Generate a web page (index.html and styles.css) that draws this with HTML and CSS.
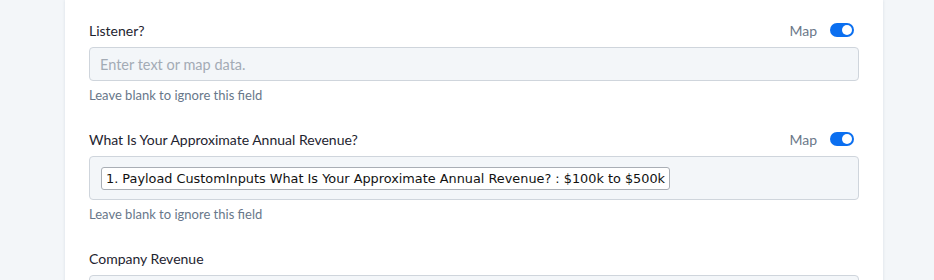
FILE: index.html
```html
<!DOCTYPE html>
<html lang="en">
<head>
    <meta charset="UTF-8">
    <meta name="viewport" content="width=device-width, initial-scale=1.0">
    <title>Field Mapping</title>
    <link rel="stylesheet" href="styles.css">
</head>
<body>
    <div class="card">
        <!-- Listener -->
        <div class="field">
            <div class="field-head">
                <label class="field-label">Listener?</label>
                <div class="map-switch">
                    <span>Map</span>
                    <span class="toggle on"></span>
                </div>
            </div>
            <div class="field-input">
                <span class="placeholder">Enter text or map data.</span>
            </div>
            <div class="field-help">Leave blank to ignore this field</div>
        </div>

        <!-- Revenue -->
        <div class="field">
            <div class="field-head">
                <label class="field-label">What Is Your Approximate Annual Revenue?</label>
                <div class="map-switch">
                    <span>Map</span>
                    <span class="toggle on"></span>
                </div>
            </div>
            <div class="field-input mapped">
                <span class="chip">1. Payload CustomInputs What Is Your Approximate Annual Revenue? : $100k to $500k</span>
            </div>
            <div class="field-help">Leave blank to ignore this field</div>
        </div>

        <!-- Company Revenue -->
        <div class="field">
            <div class="field-head">
                <label class="field-label">Company Revenue</label>
            </div>
            <div class="field-input"></div>
        </div>
    </div>
</body>
</html>
```

FILE: styles.css
```css
body {
    margin: 0;
    background: #f3f6f9;
    font-family: Lato, "Open Sans", sans-serif;
    height: 280px;
    overflow: hidden;
}

.card {
    margin-left: 65px;
    width: 818px;
    box-sizing: border-box;
    padding: 20px 24px 0;
    background: #fff;
    box-shadow: 0 0 3px rgba(40, 60, 90, 0.12);
    min-height: 400px;
}

.field {
    margin-bottom: 26px;
}

.field-head {
    display: flex;
    justify-content: space-between;
    align-items: center;
    height: 20px;
    margin-bottom: 7px;
}

.field-label {
    font-size: 14px;
    color: #1e2430;
}

.map-switch {
    display: flex;
    align-items: center;
    gap: 13px;
    font-size: 14px;
    color: #6b7889;
    padding-right: 5px;
}

.toggle {
    position: relative;
    width: 24px;
    height: 14px;
    border-radius: 7px;
    background: #c8ced6;
}

.toggle.on {
    background: #0b6ff0;
}

.toggle::after {
    content: "";
    position: absolute;
    top: 2px;
    left: 2px;
    width: 10px;
    height: 10px;
    border-radius: 50%;
    background: #fff;
}

.toggle.on::after {
    left: 12px;
}

.field-input {
    height: 34px;
    box-sizing: border-box;
    border: 1px solid #cfd5dc;
    border-radius: 4px;
    background: #f3f6f9;
    padding: 0 10px;
    display: flex;
    align-items: center;
}

.field-input.mapped {
    height: 44px;
    padding: 0 11px;
}

.placeholder {
    font-size: 14.5px;
    color: #a3abb5;
}

.chip {
    font-family: "DejaVu Sans", Verdana, sans-serif;
    font-size: 12.85px;
    color: #111;
    background: #fff;
    border: 1px solid #a9aeb5;
    border-radius: 3px;
    height: 23px;
    box-sizing: border-box;
    padding: 0 4px;
    display: flex;
    align-items: center;
}

.field-help {
    margin-top: 6px;
    font-size: 13px;
    line-height: 16px;
    color: #68778a;
}
```
